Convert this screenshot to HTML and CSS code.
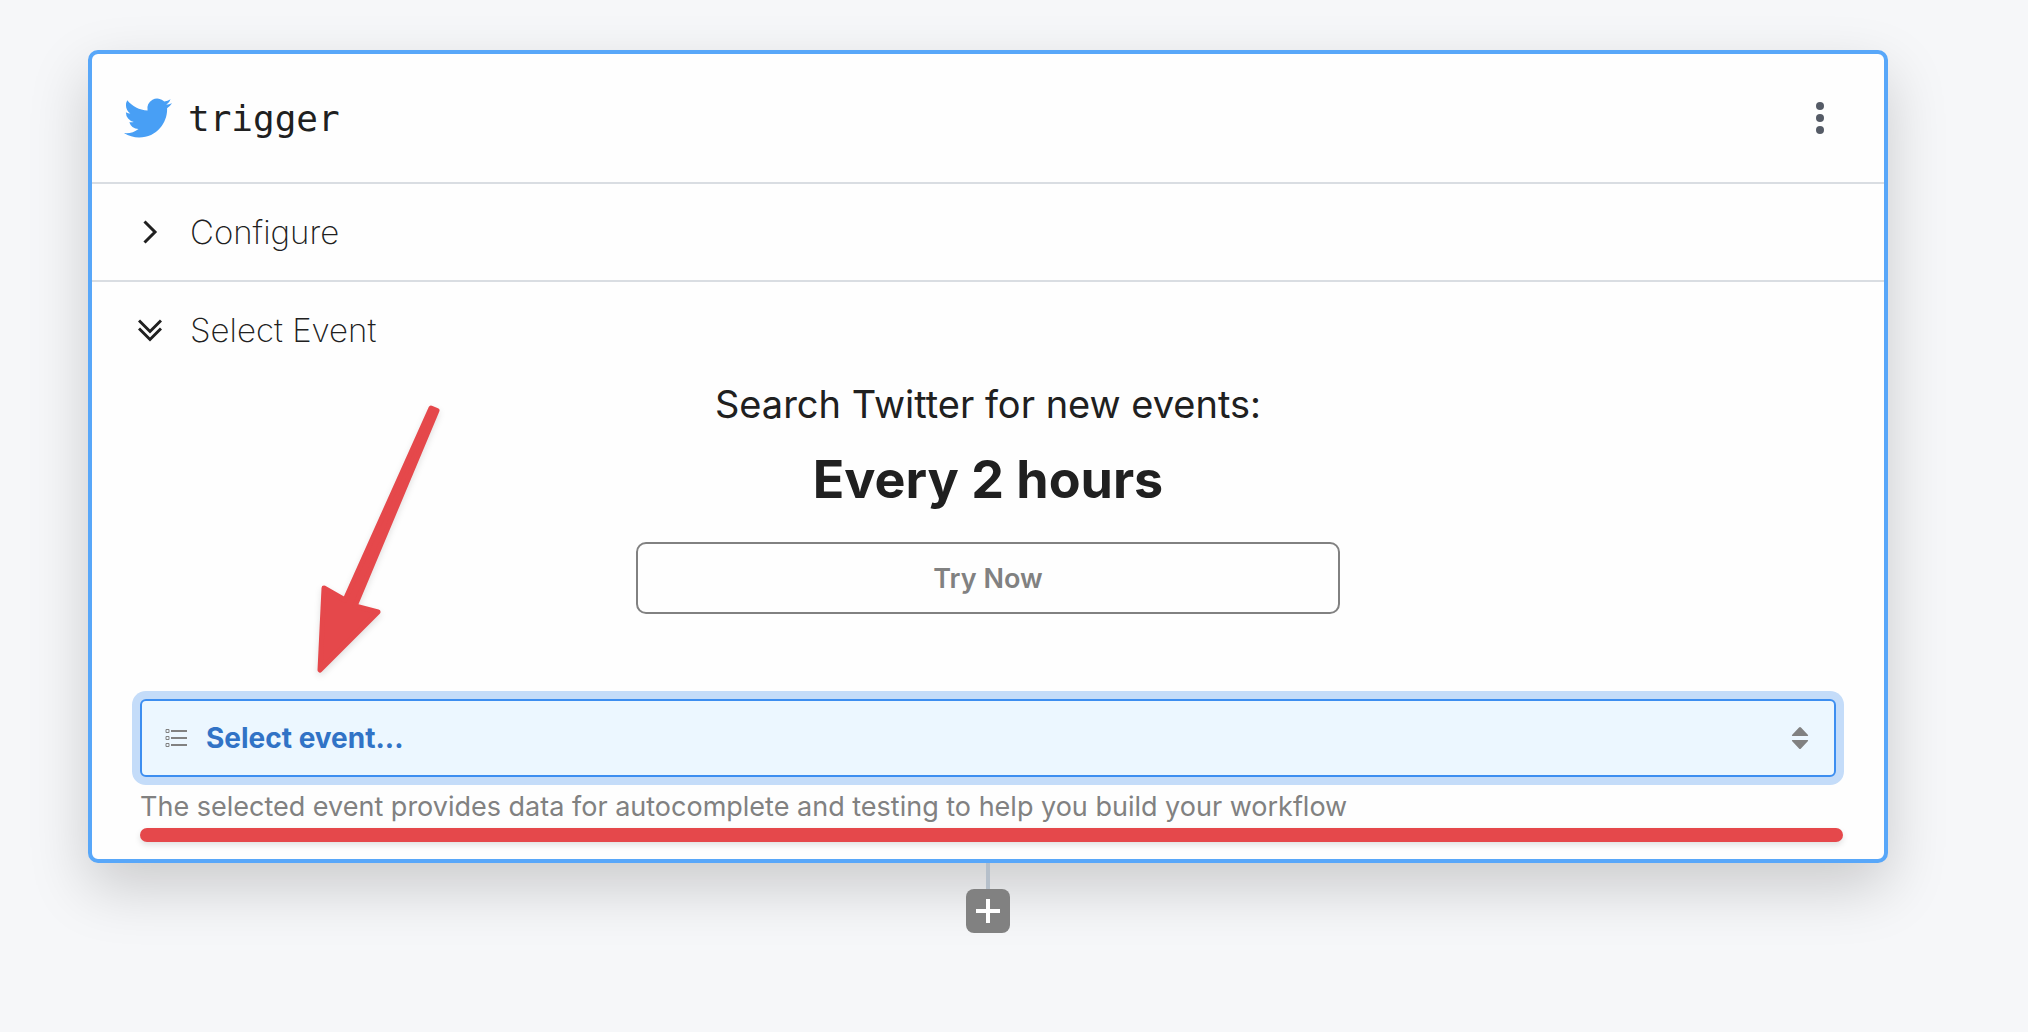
FILE: index.html
```html
<!DOCTYPE html>
<html lang="en">
<head>
    <meta charset="UTF-8">
    <meta name="viewport" content="width=device-width, initial-scale=1.0">
    <title>trigger</title>
    <link rel="stylesheet" href="styles.css">
</head>
<body>
    <main class="workflow">
        <section class="card">
            <header class="card-header">
                <svg class="logo" viewBox="0 0 24 24" aria-hidden="true">
                    <path d="M23.953 4.57a10 10 0 01-2.825.775 4.958 4.958 0 002.163-2.723c-.951.555-2.005.959-3.127 1.184a4.92 4.92 0 00-8.384 4.482C7.69 8.095 4.067 6.13 1.64 3.162a4.822 4.822 0 00-.666 2.475c0 1.71.87 3.213 2.188 4.096a4.904 4.904 0 01-2.228-.616v.06a4.923 4.923 0 003.946 4.827 4.996 4.996 0 01-2.212.085 4.936 4.936 0 004.604 3.417 9.867 9.867 0 01-6.102 2.105c-.39 0-.779-.023-1.17-.067a13.995 13.995 0 007.557 2.209c9.053 0 13.998-7.496 13.998-13.985 0-.21 0-.42-.015-.63A9.935 9.935 0 0024 4.59z"/>
                </svg>
                <h1>trigger</h1>
                <button class="menu" type="button" aria-label="More">
                    <svg width="8" height="32" viewBox="0 0 8 32">
                        <circle cx="4" cy="4" r="4"/>
                        <circle cx="4" cy="16" r="4"/>
                        <circle cx="4" cy="28" r="4"/>
                    </svg>
                </button>
            </header>

            <button class="row" type="button" aria-expanded="false">
                <svg class="chevron" viewBox="0 0 24 24"><path d="M6.5 1.5L17 12L6.5 22.5"/></svg>
                <span>Configure</span>
            </button>

            <div class="event">
                <button class="row" type="button" aria-expanded="true">
                    <svg class="chevron" viewBox="0 0 24 24"><path d="M1 2.5L12 13.5L23 2.5M1 10.5L12 21.5L23 10.5"/></svg>
                    <span>Select Event</span>
                </button>

                <div class="content">
                    <div class="schedule">
                        <p class="intro">Search Twitter for new events:</p>
                        <h2>Every 2 hours</h2>
                        <button class="try" type="button">Try Now</button>
                    </div>

                    <div class="field">
                        <svg class="list" width="22" height="20" viewBox="0 0 22 20">
                            <path class="box" d="M1 1.5h3v3h-3zM1 8.5h3v3h-3zM1 15.5h3v3h-3z"/>
                            <path class="line" d="M6 3h16M6 10h16M6 17h16"/>
                        </svg>
                        <select aria-label="Select event" aria-describedby="help">
                            <option>Select event...</option>
                        </select>
                        <svg class="sort" width="18" height="24" viewBox="0 0 18 24">
                            <path d="M8 1.500Q9 .5 10 1.500L17 9Q17.500 10 16.500 10H1.500Q.5 10 1 9zM8 22.500Q9 23.500 10 22.500L17 15Q17.500 14 16.500 14H1.500Q.5 14 1 15z"/>
                        </svg>
                    </div>
                    <p class="help" id="help">The selected event provides data for autocomplete and testing to help you build your workflow</p>
                    <div class="underline"></div>
                </div>

                <!-- arrow pointing at the select -->
                <svg class="arrow" width="140" height="290" viewBox="0 0 140 290">
                    <path d="M121 13L127 15.500L45 211L68 217L10 275L14 193L35 205z"/>
                </svg>
            </div>
        </section>

        <div class="connector"></div>
        <button class="add" type="button" aria-label="Add step">
            <svg width="24" height="24" viewBox="0 0 24 24"><path d="M12 0v24M0 12h24"/></svg>
        </button>
    </main>
</body>
</html>
```

FILE: styles.css
```css
* {
    margin: 0;
    padding: 0;
    box-sizing: border-box;
}

body {
    font-family: Inter, "Liberation Sans", sans-serif;
    color: #202020;
    background-color: #f6f7f9;
}

button {
    font-family: inherit;
    color: inherit;
    background: none;
    border: none;
    cursor: pointer;
}

.workflow {
    display: flex;
    flex-direction: column;
    align-items: center;
    padding: 50px 140px 50px 88px;
}

.card {
    width: 100%;
    background-color: #fefefe;
    border: 4px solid #58a7f9;
    border-radius: 10px;
    box-shadow: 0 24px 60px rgba(0, 0, 0, 0.18);
}

/* header */
.card-header {
    display: flex;
    align-items: center;
    height: 128px;
    padding: 0 60px 0 32px;
}

.logo {
    width: 48px;
    height: 48px;
    margin-right: 16px;
    fill: #489ff5;
}

.card-header h1 {
    flex: 1;
    font-family: "DejaVu Sans Mono", monospace;
    font-size: 36px;
    font-weight: normal;
}

.menu {
    display: flex;
}

.menu svg {
    fill: #555b66;
}

/* collapsible rows */
.row {
    display: flex;
    align-items: center;
    gap: 28px;
    width: 100%;
    height: 98px;
    padding: 0 46px;
    border-top: 2px solid #d9dde2;
    font-size: 33px;
    font-weight: 200;
}

.chevron {
    width: 24px;
    height: 24px;
    fill: none;
    stroke: #202020;
    stroke-width: 3;
}

.event {
    position: relative;
}

.content {
    padding: 0 48px 17px;
}

.schedule {
    display: flex;
    flex-direction: column;
    align-items: center;
    margin-bottom: 85px;
}

.intro {
    font-size: 38px;
    line-height: 52px;
}

.schedule h2 {
    margin: 12px 0 24px;
    font-size: 52px;
    line-height: 76px;
}

.try {
    width: 704px;
    max-width: 100%;
    height: 72px;
    border: 2px solid #818181;
    border-radius: 10px;
    color: #818181;
    font-size: 27px;
    font-weight: 600;
}

/* event select */
.field {
    display: flex;
    align-items: center;
    position: relative;
    height: 78px;
}

.field select {
    width: 100%;
    height: 100%;
    padding: 0 64px;
    appearance: none;
    border: 2px solid #3d8ef0;
    border-radius: 6px;
    box-shadow: 0 0 0 8px #c4dcf9;
    background-color: #ecf7ff;
    color: #3173c6;
    font-family: inherit;
    font-size: 28px;
    font-weight: 700;
    outline: none;
}

/* icons sit on top of the select */
.list,
.sort {
    position: absolute;
    pointer-events: none;
}

.list {
    left: 25px;
    fill: none;
    stroke: #818181;
}

.list .line {
    stroke-width: 2;
}

.sort {
    right: 27px;
    fill: #818181;
}

.help {
    margin-top: 10px;
    color: #818181;
    font-size: 27px;
    line-height: 40px;
}

.underline {
    height: 14px;
    margin: 1px -7px 0 0;
    border-radius: 7px;
    background-color: #e5484b;
    box-shadow: 0 3px 6px rgba(0, 0, 0, 0.12);
}

.arrow {
    position: absolute;
    top: 115px;
    left: 218px;
    fill: #e5484b;
    stroke: #e5484b;
    stroke-width: 5;
    stroke-linejoin: round;
    filter: drop-shadow(0 3px 3px rgba(0, 0, 0, 0.12));
}

/* next step */
.connector {
    width: 4px;
    height: 26px;
    background-color: #b5bfca;
}

.add {
    display: flex;
    align-items: center;
    justify-content: center;
    width: 44px;
    height: 44px;
    border-radius: 8px;
    background-color: #818181;
}

.add svg {
    stroke: #fff;
    stroke-width: 4;
}
```
